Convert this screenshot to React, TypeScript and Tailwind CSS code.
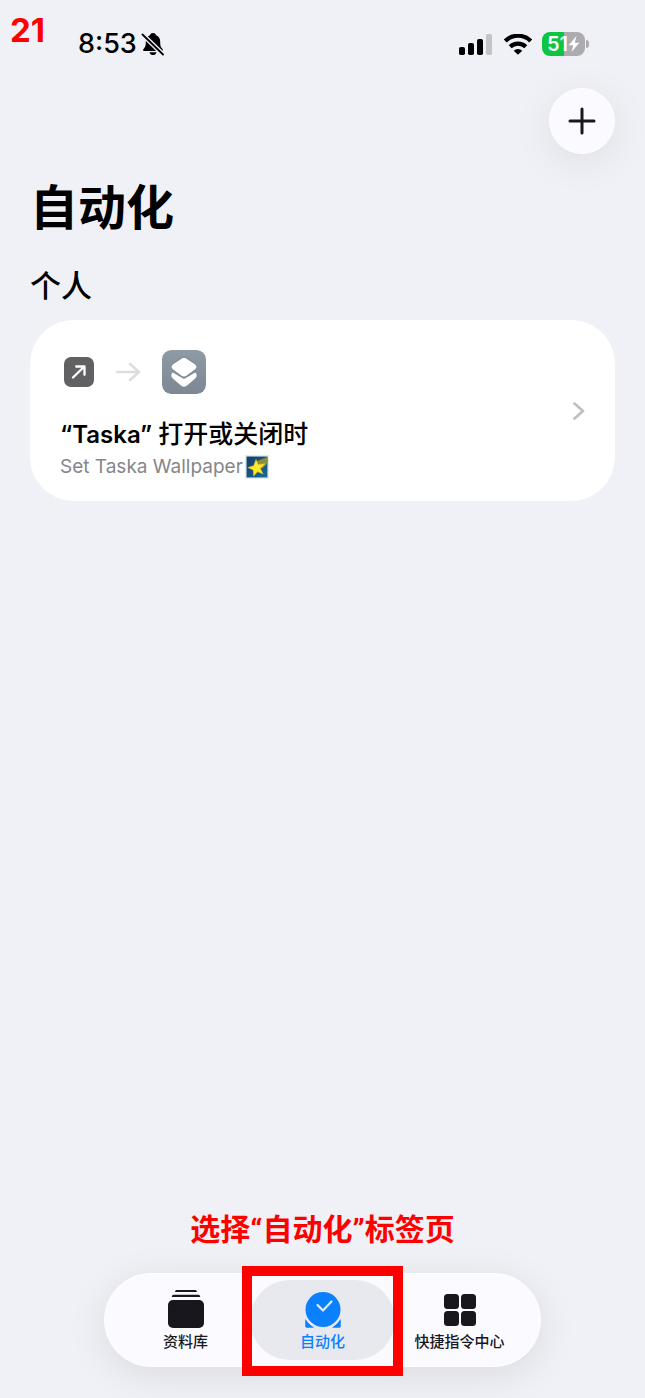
import type { ReactNode } from 'react';

function StatusBar() {
  return (
    <div className="flex h-22 items-center justify-between pl-[78px] pr-14">
      <div className="flex items-center gap-1">
        <span className="text-[27px] leading-8 font-medium">8:53</span>
        <svg width="24" height="24" viewBox="0 0 24 24" fill="currentColor" aria-label="静音">
          <path d="M12 1c1.6 0 2.7.9 3 2.3 2.900 1.100 4.200 3.400 4.200 6.400 0 4 .5 5.300 2.300 7.200.7.800.5 2.100-.8 2.100H3.300c-1.300 0-1.500-1.300-.8-2.100 1.800-1.900 2.300-3.200 2.300-7.200 0-3 1.300-5.300 4.200-6.400C9.300 1.900 10.400 1 12 1Z" />
          <path d="M8.500 20.200h7c-.3 1.800-1.700 2.900-3.500 2.900s-3.200-1.100-3.500-2.900Z" />
          <path d="M1.500 2.500 22 22.500" stroke="#f0f1f6" strokeWidth="4.600" />
          <path d="M1.500 2.500 22 22.500" stroke="currentColor" strokeWidth="1.800" strokeLinecap="round" />
        </svg>
      </div>
      <div className="flex items-center gap-3">
        <svg width="33" height="21" viewBox="0 0 33 21" aria-label="信号">
          <rect x="0" y="13" width="6" height="8" rx="1.800" />
          <rect x="9" y="9" width="6" height="12" rx="1.800" />
          <rect x="18" y="5" width="6" height="16" rx="1.800" />
          <rect x="27" y="0" width="6" height="21" rx="1.800" fill="#c3c4c8" />
        </svg>
        <svg width="28" height="21" viewBox="0 0 28 21" fill="none" stroke="currentColor" strokeWidth="4.200" aria-label="无线网络">
          <path d="M1.300 7a18 18 0 0 1 25.400 0" />
          <path d="M6.200 12.700a11.200 11.200 0 0 1 15.600 0" />
          <path d="M14 20.800 9.700 16.700a6.200 6.200 0 0 1 8.600 0Z" fill="currentColor" stroke="none" />
        </svg>
        <div className="-ml-0.5 flex items-center gap-px">
          <div className="flex h-6 w-[43px] items-center justify-center rounded-lg bg-linear-to-r from-[#0cc543] from-52% to-[#acacb0] to-52% text-white">
            <span className="text-[20px] leading-6 font-semibold">51</span>
            <svg width="12" height="18" viewBox="0 0 12 18" fill="currentColor">
              <path d="M8.500 1 .6 10.200h4.600L3.500 17l7.900-9.300H6.800Z" />
            </svg>
          </div>
          <div className="h-2 w-[3px] rounded-r-full bg-[#acacb0]" />
        </div>
      </div>
    </div>
  );
}

function AutomationCard() {
  return (
    <button
      type="button"
      className="mt-3.5 flex w-full items-center justify-between rounded-[44px] bg-white px-[30px] py-[22px] text-left"
    >
      <div>
        <div className="flex h-13 items-center gap-[21px] pt-2 pl-1">
          <svg width="30" height="30" viewBox="0 0 30 30" fill="none">
            <rect width="30" height="30" rx="7" fill="#616163" />
            <path d="M9 20.500 20.300 9.500M12.200 9.500h8.300v8.300" stroke="white" strokeWidth="2.300" strokeLinecap="round" strokeLinejoin="round" />
          </svg>
          <svg width="26" height="20" viewBox="0 0 26 20" fill="none" stroke="#dcdddd" strokeWidth="2.600" strokeLinecap="round" strokeLinejoin="round">
            <path d="M2 10h22M15 2l9 8-9 8" />
          </svg>
          <svg width="44" height="44" viewBox="0 0 44 44">
            <defs>
              <linearGradient id="tile" x1="0" y1="0" x2="0" y2="1">
                <stop stopColor="#8e9aa5" />
                <stop offset="1" stopColor="#7b8792" />
              </linearGradient>
            </defs>
            <rect width="44" height="44" rx="9.500" fill="url(#tile)" />
            <path
              d="M10.800 22.600 22 29l11.200-6.400c2 1.300 2 4.600 0 5.900l-8.500 7.200c-1.800 1.300-3.600 1.300-5.400 0l-8.500-7.200c-2-1.300-2-4.600 0-5.900Z"
              fill="white"
            />
            <path
              d="m19.500 7.800-8.700 5.700c-2.700 1.700-2.700 5 0 6.700l8.500 6.100c1.800 1.200 3.600 1.200 5.400 0l8.500-6.100c2.700-1.700 2.700-5 0-6.700l-8.700-5.700c-1.700-1-3.300-1-5 0Z"
              fill="white"
              stroke="#838f9a"
              strokeWidth="1.500"
            />
          </svg>
        </div>
        <p className="mt-6 text-[24px] leading-8 font-semibold">
          “Taska” <span className="text-[25px] font-medium">打开或关闭时</span>
        </p>
        <p className="mt-1 flex h-6 items-center gap-0.5 text-[19px] text-[#86868a]">
          Set Taska Wallpaper
          <svg width="24" height="24" viewBox="0 0 24 24" aria-label="流星">
            <defs>
              <linearGradient id="sky" x1="0" y1="0" x2="1" y2="1">
                <stop stopColor="#153d63" />
                <stop offset="1" stopColor="#16699a" />
              </linearGradient>
            </defs>
            <rect width="24" height="24" fill="#d9dcdf" />
            <rect x=".5" y=".5" width="23" height="23" fill="#f6f7f8" />
            <rect x="1.500" y="1.500" width="21" height="21" fill="url(#sky)" />
            <path d="M12 6 22.500 2v6L17 14Z" fill="#8b8f3c" />
            <path d="m11 4.500 2.400 4.900 6.600-.6-4.600 4.700 2.700 5.500-5.500-2.300-4 4.300-.3-5.900-5.500-2.600 5.900-1.700Z" fill="#ffe928" stroke="#e6b925" strokeWidth=".6" />
          </svg>
        </p>
      </div>
      <svg width="13" height="20" viewBox="0 0 13 20" fill="none" stroke="#c0c0c2" strokeWidth="2.800" strokeLinecap="round" strokeLinejoin="round">
        <path d="m2.500 2.500 8.500 7.500-8.500 7.500" />
      </svg>
    </button>
  );
}

function Tab({ icon, label, active = false }: { icon: ReactNode; label: string; active?: boolean }) {
  return (
    <button
      type="button"
      aria-current={active ? 'page' : undefined}
      className={
        active
          ? 'relative flex h-20 flex-col items-center pt-2.5 text-[#0b80ff]'
          : 'relative flex h-20 flex-col items-center pt-2.5 text-[#17171d]'
      }
    >
      {active && <span className="absolute -inset-x-1 inset-y-0 rounded-full bg-[#e8e9ee]" />}
      <span className="relative flex h-10 items-center">{icon}</span>
      <span className="relative text-[15px] leading-6 font-medium whitespace-nowrap">{label}</span>
      {active && <span className="absolute -inset-x-3 -top-3.5 -bottom-4 border-10 border-[#ff0000]" />}
    </button>
  );
}

const libraryIcon = (
  <svg width="36" height="40" viewBox="0 0 36 40" fill="currentColor">
    <path d="M8.500 0h19c.7 0 1.200.8 1.500 2H7C7.300.8 7.800 0 8.500 0ZM5.500 4.800h25c.9 0 1.500.8 1.800 2.300H3.700c.3-1.500.9-2.300 1.800-2.300Z" />
    <rect y="10" width="36" height="28" rx="5" />
  </svg>
);

const automationIcon = (
  <svg width="36" height="36" viewBox="0 0 36 36" fill="currentColor">
    <path d="M.5 27c2 3.500 4.700 6.300 8.500 8.500H2c-1 0-1.500-.5-1.500-1.500ZM35.500 27c-2 3.500-4.700 6.300-8.500 8.500h7c1 0 1.500-.5 1.500-1.500Z" />
    <circle cx="18" cy="17.500" r="19" fill="#e8e9ee" />
    <path d="M.5 27.500c1.700 3.200 4.500 6 8 8H2c-1 0-1.500-.5-1.500-1.500ZM35.500 27.500c-1.700 3.200-4.500 6-8 8H34c1 0 1.500-.5 1.500-1.500Z" />
    <circle cx="18" cy="17.500" r="17.500" />
    <path d="m12.500 13 5.500 5.500 8.500-9" fill="none" stroke="#e8e9ee" strokeWidth="2.200" strokeLinecap="round" strokeLinejoin="round" />
  </svg>
);

const galleryIcon = (
  <svg width="32" height="32" viewBox="0 0 32 32" fill="currentColor">
    <rect width="15" height="15" rx="3.500" />
    <rect x="17" width="15" height="15" rx="3.500" />
    <rect y="17" width="15" height="15" rx="3.500" />
    <rect x="17" y="17" width="15" height="15" rx="3.500" />
  </svg>
);

export default function App() {
  return (
    <div className="relative flex min-h-screen flex-col bg-[#f0f1f6] font-['Inter','Noto_Sans_CJK_SC',sans-serif] text-black">
      <span className="absolute top-2.5 left-2.5 text-[33px] leading-10 font-bold text-[#ff0000]">21</span>
      <StatusBar />

      <main className="flex-1 px-[30px]">
        <div className="flex justify-end">
          <button
            type="button"
            aria-label="新建"
            className="flex size-[66px] items-center justify-center rounded-full border border-white bg-[#fafaff] shadow-[0_8px_40px_rgba(0,0,0,0.08)]"
          >
            <svg width="28" height="28" viewBox="0 0 28 28" stroke="#17171d" strokeWidth="3" strokeLinecap="round">
              <path d="M14 2v24M2 14h24" />
            </svg>
          </button>
        </div>
        <h1 className="mt-[26px] text-[48px] leading-14 font-bold">自动化</h1>
        <h2 className="mt-[30px] text-[31px] leading-10 font-medium">个人</h2>
        <AutomationCard />
      </main>

      <footer className="flex flex-col items-center pb-[31px]">
        <p className="mb-[23px] font-['Roboto','Noto_Sans_CJK_SC',sans-serif] text-[30px] leading-10 font-bold text-[#ff0000]">
          选择“自动化”标签页
        </p>
        <nav className="grid grid-cols-[repeat(3,137px)] rounded-full border border-white bg-[#fafaff] px-3 py-1.5 shadow-[0_8px_40px_rgba(0,0,0,0.09)]">
          <Tab icon={libraryIcon} label="资料库" />
          <Tab icon={automationIcon} label="自动化" active />
          <Tab icon={galleryIcon} label="快捷指令中心" />
        </nav>
      </footer>
    </div>
  );
}
